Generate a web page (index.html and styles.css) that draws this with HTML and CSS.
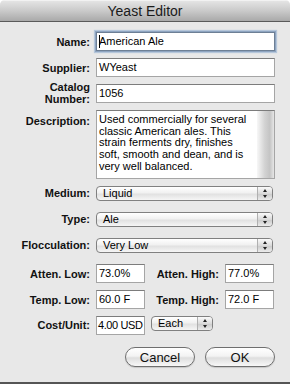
FILE: index.html
```html
<!DOCTYPE html>
<html lang="en">
<head>
    <meta charset="UTF-8">
    <title>Yeast Editor</title>
    <link rel="stylesheet" href="styles.css">
</head>
<body>
<div class="window">
    <div class="titlebar">Yeast Editor</div>

    <div class="form">
        <!-- Name -->
        <div class="row">
            <span class="label">Name:</span>
            <div class="field focused"><span class="caret"></span>American Ale</div>
        </div>

        <!-- Supplier -->
        <div class="row">
            <span class="label">Supplier:</span>
            <div class="field">WYeast</div>
        </div>

        <!-- Catalog number -->
        <div class="row">
            <span class="label two-lines">Catalog Number:</span>
            <div class="field">1056</div>
        </div>

        <!-- Description -->
        <div class="row top">
            <span class="label desc-label">Description:</span>
            <div class="textarea">
                <div class="textarea-text">Used commercially for several classic American ales. This strain ferments dry, finishes soft, smooth and dean, and is very well balanced.</div>
                <div class="scroller"></div>
            </div>
        </div>

        <!-- Popups -->
        <div class="row popup-row">
            <span class="label">Medium:</span>
            <div class="popup wide">Liquid<span class="arrows"></span></div>
        </div>
        <div class="row popup-row">
            <span class="label">Type:</span>
            <div class="popup wide">Ale<span class="arrows"></span></div>
        </div>
        <div class="row popup-row">
            <span class="label">Flocculation:</span>
            <div class="popup wide">Very Low<span class="arrows"></span></div>
        </div>

        <!-- Attenuation -->
        <div class="row">
            <span class="label">Atten. Low:</span>
            <div class="field short">73.0%</div>
            <span class="label mid">Atten. High:</span>
            <div class="field short">77.0%</div>
        </div>

        <!-- Temperature -->
        <div class="row">
            <span class="label">Temp. Low:</span>
            <div class="field short">60.0 F</div>
            <span class="label mid">Temp. High:</span>
            <div class="field short">72.0 F</div>
        </div>

        <!-- Cost -->
        <div class="row top">
            <span class="label cost-label">Cost/Unit:</span>
            <div class="field short tight">4.00 USD</div>
            <div class="popup unit">Each<span class="arrows"></span></div>
        </div>

        <div class="buttons">
            <button class="button">Cancel</button>
            <button class="button">OK</button>
        </div>
    </div>
</div>
</body>
</html>
```

FILE: styles.css
```css
body {
    margin: 0;
    font-family: "Liberation Sans", Arial, sans-serif;
    color: #000;
    background: #fff;
}
.window {
    width: 290px;
    height: 384px;
    box-sizing: border-box;
    background: #e8e8e8;
    border-bottom: 2px solid #555;
    border-radius: 5px 5px 0 0;
    overflow: hidden;
}
.titlebar {
    height: 22px;
    line-height: 20px;
    text-align: center;
    font-size: 14px;
    color: #1a1a1a;
    background: linear-gradient(#e4e4e4, #c9c9c9 50%, #a9a9a9);
    border-top: 1px solid #f2f2f2;
    border-bottom: 1px solid #5a5a5a;
    box-sizing: border-box;
}
.form {
    display: flex;
    flex-direction: column;
    gap: 7px;
    padding-top: 10px;
}
.row {
    display: flex;
    align-items: center;
    gap: 6px;
    height: 19px;
}
.row.top {
    align-items: flex-start;
    height: auto;
}
.label {
    width: 90px;
    flex: none;
    text-align: right;
    font-size: 11px;
    font-weight: bold;
    color: #111;
}
.label.mid {
    width: 68px;
}
.two-lines {
    line-height: 12px;
    padding-left: 40px;
    box-sizing: border-box;
    margin-top: -2px;
}
.desc-label {
    padding-top: 5px;
}
.cost-label {
    line-height: 18px;
}
.field {
    width: 179px;
    height: 19px;
    flex: none;
    box-sizing: border-box;
    background: #fff;
    border: 1px solid #a5a5a5;
    border-top-color: #7c7c7c;
    padding: 0 2px;
    font-size: 11px;
    line-height: 17px;
    white-space: nowrap;
    overflow: hidden;
    position: relative;
}
.field.short {
    width: 49px;
}
.field.tight {
    letter-spacing: -0.4px;
    padding: 0 1px;
}
.field.focused {
    border-color: #6d7f95;
    box-shadow: 0 0 0 1px #8ea4c0, 0 0 1px 2px #b5c6da;
}
.caret {
    position: absolute;
    left: 2px;
    top: 2px;
    width: 1px;
    height: 13px;
    background: #000;
}
.textarea {
    width: 179px;
    height: 69px;
    box-sizing: border-box;
    background: #fff;
    border: 1px solid #a5a5a5;
    border-top-color: #7c7c7c;
    display: flex;
}
.textarea-text {
    flex: 1;
    padding: 3px 2px 0 2px;
    font-size: 11px;
    line-height: 11.7px;
}
.scroller {
    width: 17px;
    flex: none;
    background: linear-gradient(to right, #f7f7f7, #d3d3d3 45%, #c4c4c4 75%, #e6e6e6);
}
.popup-row {
    align-items: flex-start;
}
.popup-row .label {
    line-height: 15px;
}
.popup {
    position: relative;
    flex: none;
    height: 15px;
    box-sizing: border-box;
    border: 1px solid #808080;
    border-radius: 4px;
    background: linear-gradient(#ffffff, #f1f1f1 45%, #e1e1e1 55%, #f6f6f6);
    font-size: 11px;
    line-height: 13px;
    padding-left: 6px;
}
.popup.wide {
    width: 177px;
}
.popup.unit {
    width: 62px;
}
.arrows {
    position: absolute;
    right: 0;
    top: 0;
    bottom: 0;
    width: 14px;
    border-left: 1px solid #b0b0b0;
    border-radius: 0 3px 3px 0;
    background: linear-gradient(#fafafa, #dadada 50%, #c9c9c9 51%, #ececec);
}
.arrows::before, .arrows::after {
    content: "";
    position: absolute;
    left: 5px;
    border-left: 2.5px solid transparent;
    border-right: 2.5px solid transparent;
}
.arrows::before {
    top: 2px;
    border-bottom: 3px solid #222;
}
.arrows::after {
    bottom: 2px;
    border-top: 3px solid #222;
}
.buttons {
    display: flex;
    justify-content: flex-end;
    gap: 10px;
    padding-right: 15px;
    margin-top: 5px;
}
.button {
    width: 70px;
    height: 20px;
    box-sizing: border-box;
    border: 1px solid #6f6f6f;
    border-radius: 10px;
    background: linear-gradient(#ffffff, #f3f3f3 45%, #dedede 55%, #f8f8f8);
    box-shadow: 0 1px 1px rgba(0, 0, 0, 0.15);
    font-family: "Liberation Sans", Arial, sans-serif;
    font-size: 13px;
    line-height: 17px;
    padding: 0;
    color: #111;
}
```
